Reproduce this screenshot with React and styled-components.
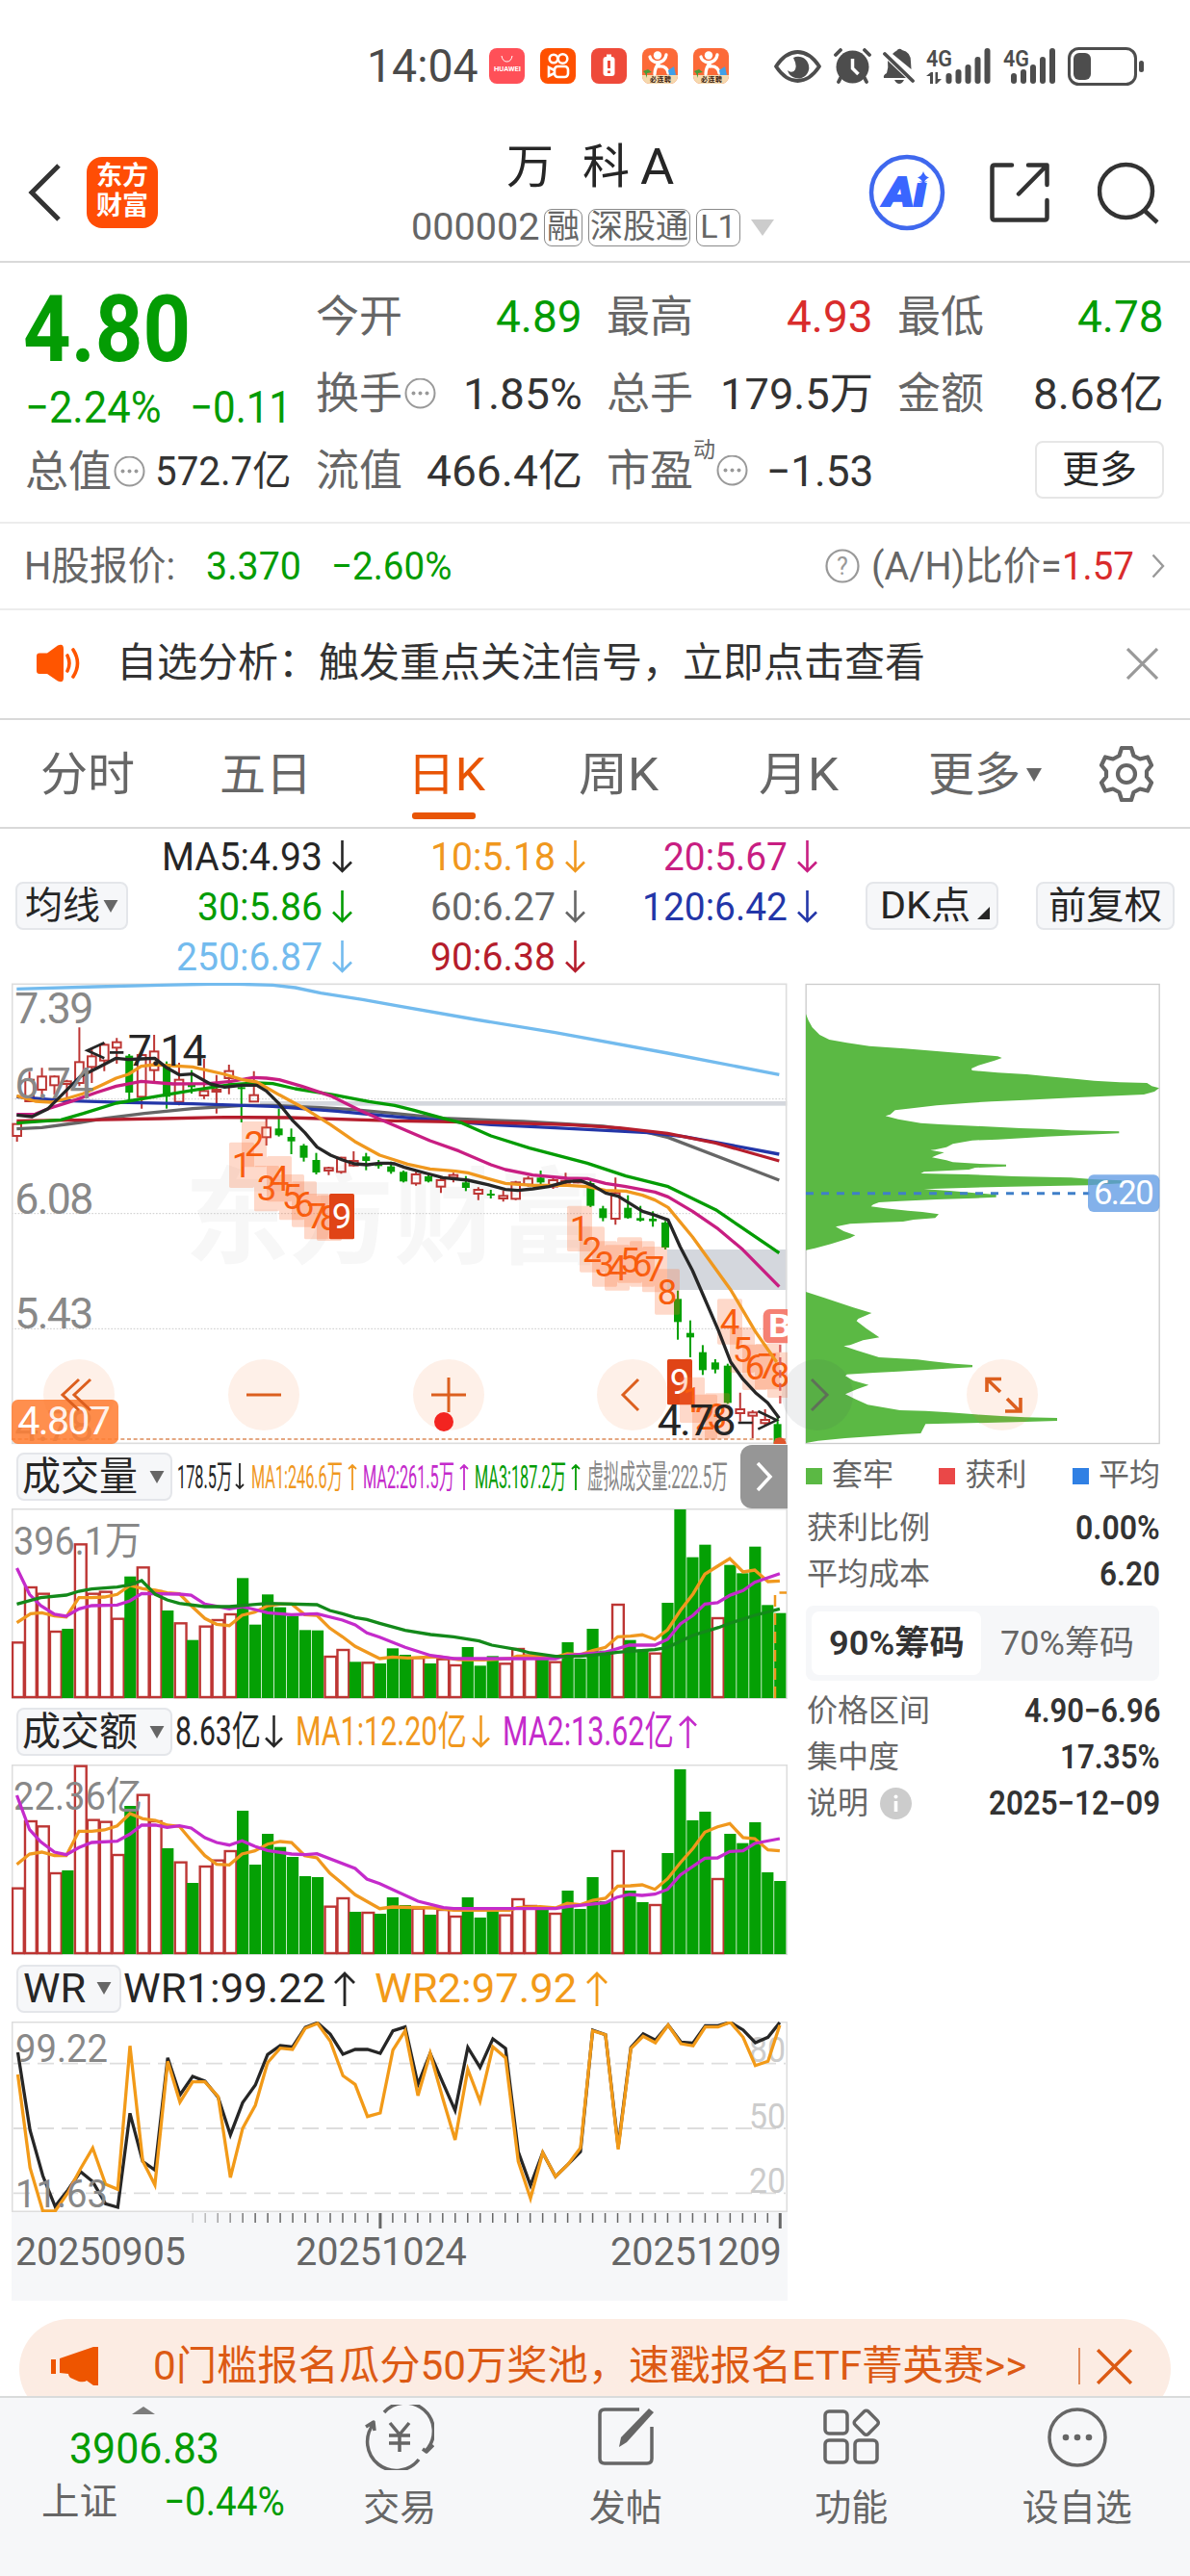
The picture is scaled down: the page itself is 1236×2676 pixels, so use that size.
import React, { useLayoutEffect, useRef, useState } from "react";
import styled, { createGlobalStyle } from "styled-components";

const C = {
  ink: "#262626",
  dark: "#333",
  grey: "#666",
  light: "#888",
  green: "#049c04",
  barGreen: "#04a004",
  red: "#d92c2c",
  barRed: "#bd3634",
  orange: "#f0981e",
  magenta: "#c81e82",
  violet: "#c42bcb",
  blue: "#2336a8",
  sky: "#73bbee",
  crimson: "#b51d2c",
  brand: "#e85506",
};

const GlobalStyle = createGlobalStyle`
  html, body { margin: 0; background: #fff; }
  body { width: 1236px; font-family: Roboto, "Noto Sans CJK SC", sans-serif; color: ${C.dark}; }
  svg { display: block; flex: none; }
  svg text { font-family: Roboto, "Noto Sans CJK SC", sans-serif; }
`;

/* ---------- text that keeps a set width ---------- */

const FitBox = styled.span`
  display: inline-block;
  flex: none;
  width: ${(p) => p.$w}px;
  margin-left: ${(p) => p.$ml || 0}px;
  font-size: ${(p) => (p.$size ? p.$size + "px" : "inherit")};
  font-weight: ${(p) => p.$weight || "inherit"};
  color: ${(p) => p.$color || "inherit"};
  line-height: 1;
  white-space: pre;
`;
const FitInner = styled.span`
  display: inline-block;
  transform-origin: 0 50%;
`;

function Fit({ w, ml, size, color, weight, children }) {
  const ref = useRef(null);
  const [scale, setScale] = useState(1);
  useLayoutEffect(() => {
    const n = ref.current.offsetWidth;
    if (n) setScale(w / n);
  }, [w, children]);
  return (
    <FitBox $w={w} $ml={ml} $size={size} $color={color} $weight={weight}>
      <FitInner ref={ref} style={{ transform: `scaleX(${scale})` }}>{children}</FitInner>
    </FitBox>
  );
}

/* ---------- page frame ---------- */

const Page = styled.div`
  width: 1236px;
  height: 2676px;
  overflow: hidden;
  display: flex;
  flex-direction: column;
  background: #fff;
`;

/* ---------- status bar ---------- */

const StatusBar = styled.div`
  height: 137px;
  padding-left: 381px;
  display: flex;
  align-items: center;
  flex: none;
  box-sizing: border-box;
`;
const AppIcons = styled.div`
  display: flex;
  gap: 16px;
  margin: 0 47px 0 11px;
`;
const SysIcons = styled.div`
  display: flex;
  align-items: center;
  height: 40px;
`;
const Gap = styled.i`
  width: ${(p) => p.$w}px;
  flex: none;
`;

const AppTile = ({ bg, children }) => (
  <svg width="37" height="37" viewBox="0 0 37 37">
    <rect width="37" height="37" rx="8" fill={bg} />
    {children}
  </svg>
);

const RunnerTile = () => (
  <svg width="37" height="37" viewBox="0 0 37 37">
    <rect width="37" height="37" rx="8" fill="#fc6a38" />
    <path d="M0 28H37V29a8 8 0 0 1-8 8H8a8 8 0 0 1-8-8Z" fill="#f5d9ae" />
    <circle cx="16" cy="7.500" r="4.200" fill="#fff" />
    <path d="M8 9Q9 14 16 15Q24 14 25 7M18 15Q13 20 13 27M17 19Q26 18 27 26" fill="none" stroke="#fff" strokeWidth="3.300" strokeLinecap="round" />
    <path d="M1 24l5-2 4 3-5 1v5l-2-5z" fill="#4a9a3a" />
    <path d="M27 23l6-4 2 9h-7z" fill="#3fa0e8" />
    <text x="8" y="35" fontSize="7" fontWeight="700" fill="#3a1c10" textLength="22">必连聘</text>
  </svg>
);

const Signal = ({ data }) => (
  <svg width={data ? 67 : 55} height="38" viewBox={data ? "0 0 67 38" : "0 0 55 38"} fill="#4d4d4d" overflow="visible">
    <text x="0" y="18.500" fontSize="24" fontWeight="600" textLength="27" lengthAdjust="spacingAndGlyphs">4G</text>
    {data && <path d="M0 29l5-4h2v12H4V29zM9.500 25h2.500v7h4l-5 5H9.500z" />}
    {[11, 15, 20, 28, 37].map((h, i) => (
      <rect key={h} x={(data ? 20.5 : 8) + i * 10} y={37 - h} width="6" height={h} rx="3" />
    ))}
  </svg>
);

function Status() {
  return (
    <StatusBar>
      <Fit w={116} size={48} color="#4a4a4a">14:04</Fit>
      <AppIcons>
        <AppTile bg="#ff5058">
          <path d="M13 8q1 6 5.500 6t5.500-6" fill="none" stroke="#fff" strokeWidth="1" />
          <text x="5" y="24" fontSize="6.500" fontWeight="700" fill="#fff" textLength="28" lengthAdjust="spacingAndGlyphs">HUAWEI</text>
        </AppTile>
        <AppTile bg="#ff5000">
          <g fill="none" stroke="#fff" strokeWidth="2.600">
            <circle cx="14" cy="11" r="4.300" />
            <circle cx="23.500" cy="11" r="4.800" />
            <rect x="15" y="19" width="14" height="11" rx="3.500" />
            <path d="M15 23l-6-3v9l6-3" />
          </g>
        </AppTile>
        <AppTile bg="#ee4a3a">
          <rect x="12.500" y="9" width="12" height="20" rx="3" fill="#fff" />
          <rect x="16" y="6.500" width="5" height="3" fill="#fff" />
          <path d="M18.500 13v8M18.500 23.500v2.500" stroke="#ee4a3a" strokeWidth="3" />
        </AppTile>
        <RunnerTile />
        <RunnerTile />
      </AppIcons>
      <SysIcons>
        <svg width="49" height="34" viewBox="0 0 49 34">
          <path d="M2 17Q12 2 24.500 2T47 17Q37 32 24.500 32T2 17Z" fill="none" stroke="#4d4d4d" strokeWidth="3.800" strokeLinejoin="round" />
          <path d="M20 8A11.300 11.300 0 1 1 14 21Q17 24 20.500 22Q25 18 20 8Z" fill="#4d4d4d" />
        </svg>
        <Gap $w={13} />
        <svg width="39" height="37" viewBox="0 0 39 37">
          <g fill="none" stroke="#4d4d4d" strokeWidth="3.800" strokeLinecap="round">
            <path d="M2 7l5-5M37 7l-5-5M7 31l-2 4M32 31l2 4" />
          </g>
          <circle cx="19.500" cy="19.500" r="17" fill="#4d4d4d" />
          <path d="M19.500 11v10l6 6" fill="none" stroke="#fff" strokeWidth="3.500" />
        </svg>
        <Gap $w={12} />
        <svg width="34" height="37" viewBox="0 0 34 37">
          <path d="M10 6Q13 3 14 3Q17-1 20 2Q29 4 29 14L29.500 22Z" fill="#4d4d4d" />
          <path d="M5 13L24 31H1Q0 28 4 26Q6 20 5 13Z" fill="#4d4d4d" />
          <path d="M2 6L31 34" stroke="#4d4d4d" strokeWidth="3.800" strokeLinecap="round" />
          <path d="M12 33h10q-2 4-5 4t-5-4z" fill="#4d4d4d" />
        </svg>
        <Gap $w={11} />
        <Signal data />
        <Gap $w={13} />
        <Signal />
        <Gap $w={12} />
        <svg width="80" height="40" viewBox="0 0 80 40">
          <rect x="1.500" y="1.500" width="69" height="37" rx="10" fill="none" stroke="#4d4d4d" strokeWidth="3" />
          <rect x="6" y="6" width="18" height="28" rx="6" fill="#4d4d4d" />
          <rect x="74" y="14" width="5" height="12" rx="2.500" fill="#4d4d4d" />
        </svg>
      </SysIcons>
    </StatusBar>
  );
}

/* ---------- title bar ---------- */

const TitleBar = styled.header`
  height: 136px;
  box-sizing: border-box;
  border-bottom: 2px solid #d9d9d9;
  padding: 0 32px 8px 29px;
  display: flex;
  align-items: center;
  flex: none;
`;
const Logo = styled.div`
  width: 74px;
  height: 74px;
  border-radius: 16px;
  background: #ff4d05;
  color: #fff;
  font-size: 27px;
  font-weight: 700;
  line-height: 31px;
  text-align: center;
  padding-top: 5px;
  box-sizing: border-box;
  margin-left: 26px;
`;
const TitleBlock = styled.div`
  margin-left: 263px;
  width: 400px;
  display: flex;
  flex-direction: column;
`;
const StockName = styled.div`
  padding-left: 99px;
  height: 60px;
  display: flex;
  align-items: center;
`;
const StockMeta = styled.div`
  height: 42px;
  margin-top: 12px;
  display: flex;
  align-items: center;
  color: ${C.grey};
`;
const Chip = styled.span`
  box-sizing: border-box;
  height: 39px;
  width: ${(p) => p.$w}px;
  margin-left: ${(p) => p.$ml}px;
  border: 1.500px solid #8a8a8a;
  border-radius: 8px;
  font-size: 34px;
  line-height: 35px;
  text-align: center;
  white-space: nowrap;
`;
const TitleActions = styled.div`
  display: flex;
  align-items: center;
  margin-left: auto;
`;

function Header() {
  return (
    <TitleBar>
      <svg width="35" height="60" viewBox="0 0 35 60">
        <path d="M32 2L4 30L32 58" fill="none" stroke="#333" strokeWidth="5" />
      </svg>
      <Logo>东方<br />财富</Logo>
      <TitleBlock>
        <StockName>
          <Fit w={49} size={49} color={C.ink}>万</Fit>
          <Fit w={49} ml={30} size={49} color={C.ink}>科</Fit>
          <Fit w={35} ml={11} size={51} color={C.ink}>A</Fit>
        </StockName>
        <StockMeta>
          <Fit w={134} size={39}>000002</Fit>
          <Chip $w={40} $ml={4}>融</Chip>
          <Chip $w={106} $ml={6}>深股通</Chip>
          <Chip $w={46} $ml={6}>L1</Chip>
          <Gap $w={11} />
          <svg width="24" height="17" viewBox="0 0 24 17">
            <path d="M0 0H24L12 17Z" fill="#ccc" />
          </svg>
        </StockMeta>
      </TitleBlock>
      <TitleActions>
        <svg width="80" height="80" viewBox="0 0 80 80">
          <circle cx="40" cy="40" r="37" fill="none" stroke="#3f68ee" strokeWidth="4.500" />
          <text x="16" y="53.500" fontSize="43" fontWeight="900" fontStyle="italic" fill="#3a66ff" stroke="#3a66ff" strokeWidth="2" textLength="44" lengthAdjust="spacingAndGlyphs">Ai</text>
          <rect x="48" y="16" width="16" height="12.500" fill="#fff" />
          <path d="M57 18Q58.500 23 63 24.500Q58.500 26 57 31Q55.500 26 51 24.500Q55.500 23 57 18Z" fill="#3a66ff" />
        </svg>
        <Gap $w={46} />
        <svg width="62" height="62" viewBox="0 0 62 62" fill="none" stroke="#333" strokeWidth="4.500" strokeLinecap="round" strokeLinejoin="round">
          <path d="M23 2.500H5Q2.500 2.500 2.500 5V57Q2.500 59.500 5 59.500H57Q59.500 59.500 59.500 57V39" />
          <path d="M40 2.500H59.500V23M59 3L30 32.500" />
        </svg>
        <Gap $w={50} />
        <svg width="64" height="65" viewBox="0 0 64 65" fill="none" stroke="#333" strokeWidth="4.500">
          <circle cx="29.500" cy="30.500" r="27.500" />
          <path d="M48 50L62 63" />
        </svg>
      </TitleActions>
    </TitleBar>
  );
}

/* ---------- quote block ---------- */

const Quote = styled.section`
  height: 271px;
  box-sizing: border-box;
  border-bottom: 2px solid #ececec;
  padding: 16px 26px 0 26px;
  display: grid;
  grid-template-columns: repeat(4, 277px);
  column-gap: 25px;
  flex: none;
`;
const QuoteColumn = styled.div`
  display: flex;
  flex-direction: column;
`;
const QuoteCell = styled.div`
  height: ${(p) => p.$h || 80}px;
  display: flex;
  align-items: center;
  font-size: 45px;
  color: ${(p) => p.$color || C.dark};
  justify-content: ${(p) => (p.$end ? "flex-end" : "space-between")};
`;
const Label = styled.span`
  display: flex;
  align-items: center;
  gap: 2px;
  color: ${C.grey};
  font-size: 45px;
  line-height: 1;
  white-space: nowrap;
`;
const Sup = styled.sup`
  font-size: 23px;
  line-height: 1;
  align-self: flex-start;
  margin: -11px -1px 0 -2px;
`;
const MoreButton = styled.button`
  width: 134px;
  height: 60px;
  margin-bottom: 2px;
  border: 2px solid #e6e6e6;
  border-radius: 8px;
  background: #fff;
  color: ${C.ink};
  font: 39px Roboto, "Noto Sans CJK SC", sans-serif;
  line-height: 50px;
  padding: 0;
`;

const Dots = () => (
  <svg width="33" height="33" viewBox="0 -1 33 33">
    <circle cx="16.500" cy="14.500" r="15" fill="none" stroke="#999" strokeWidth="2" />
    {[9.5, 16.5, 23.5].map((x) => <circle key={x} cx={x} cy="14.500" r="2" fill="#999" />)}
  </svg>
);

function QuoteBlock() {
  return (
    <Quote>
      <QuoteColumn>
        <QuoteCell $h={106} $color={C.green}><Fit w={174} ml={-2} size={96} weight={700}>4.80</Fit></QuoteCell>
        <QuoteCell $h={56} $color={C.green}>
          <Fit w={142} size={46}>−2.24%</Fit>
          <Fit w={106} size={46}>−0.11</Fit>
        </QuoteCell>
        <QuoteCell $h={78}>
          <Label>总值<Dots /></Label>
          <Fit w={142} size={42}>572.7亿</Fit>
        </QuoteCell>
      </QuoteColumn>
      <QuoteColumn>
        <QuoteCell><Label>今开</Label><Fit w={90} size={46} color={C.green}>4.89</Fit></QuoteCell>
        <QuoteCell><Label>换手<Dots /></Label><Fit w={124}>1.85%</Fit></QuoteCell>
        <QuoteCell><Label>流值</Label><Fit w={162}>466.4亿</Fit></QuoteCell>
      </QuoteColumn>
      <QuoteColumn>
        <QuoteCell><Label>最高</Label><Fit w={90} size={46} color={C.red}>4.93</Fit></QuoteCell>
        <QuoteCell><Label>总手</Label><Fit w={159}>179.5万</Fit></QuoteCell>
        <QuoteCell><Label>市盈<Sup>动</Sup><Dots /></Label><Fit w={111}>−1.53</Fit></QuoteCell>
      </QuoteColumn>
      <QuoteColumn>
        <QuoteCell><Label>最低</Label><Fit w={90} size={46} color={C.green}>4.78</Fit></QuoteCell>
        <QuoteCell><Label>金额</Label><Fit w={136}>8.68亿</Fit></QuoteCell>
        <QuoteCell $end><MoreButton>更多</MoreButton></QuoteCell>
      </QuoteColumn>
    </Quote>
  );
}

/* ---------- H share row and notice ---------- */

const HShare = styled.section`
  height: 90px;
  box-sizing: border-box;
  border-bottom: 2px solid #ececec;
  padding: 0 26px 0 25px;
  display: flex;
  align-items: center;
  font-size: 41px;
  color: ${C.grey};
  flex: none;
`;
const Push = styled.span`
  margin-left: auto;
  display: flex;
  align-items: center;
`;
const Notice = styled.section`
  height: 114px;
  box-sizing: border-box;
  border-bottom: 2px solid #d9d9d9;
  padding: 0 33px 2px 37px;
  display: flex;
  align-items: center;
  color: ${C.dark};
  flex: none;
`;

const Cross = ({ size, color, width }) => (
  <svg width={size} height={size} viewBox="0 0 32 32">
    <path d="M1 1L31 31M31 1L1 31" stroke={color} strokeWidth={width} fill="none" />
  </svg>
);

function Rows() {
  return (
    <>
      <HShare>
        <Fit w={157}>H股报价:</Fit>
        <Fit w={99} ml={32} color={C.green}>3.370</Fit>
        <Fit w={125} ml={31} color={C.green}>−2.60%</Fit>
        <Push>
          <svg width="36" height="36" viewBox="0 0 36 36">
            <circle cx="18" cy="18" r="16.500" fill="none" stroke="#999" strokeWidth="2.200" />
            <text x="18" y="27" fontSize="25" textAnchor="middle" fill="#999">?</text>
          </svg>
          <Fit w={198} ml={12}>(A/H)比价=</Fit>
          <Fit w={75} color={C.red}>1.57</Fit>
          <Gap $w={18} />
          <svg width="14" height="26" viewBox="0 0 14 26">
            <path d="M1.500 1.500L12 13L1.500 24.500" fill="none" stroke="#999" strokeWidth="2.400" />
          </svg>
        </Push>
      </HShare>
      <Notice>
        <svg width="49" height="40" viewBox="0 0 49 40">
          <path d="M4 9.500H12L23 1.500Q29-1 29 5V35Q29 41 23 38.500L12 31H4Q1 31 1 28V12.500Q1 9.500 4 9.500Z" fill="#ff5500" />
          <path d="M33 12q4 8 0 16M39 6q9 14 0 28" fill="none" stroke="#ff5500" strokeWidth="3.600" strokeLinecap="round" />
        </svg>
        <Fit w={840} ml={35} size={42}>自选分析：触发重点关注信号，立即点击查看</Fit>
        <Push><Cross size={33} color="#999" width={3} /></Push>
      </Notice>
    </>
  );
}

/* ---------- period tabs ---------- */

const Tabs = styled.nav`
  height: 113px;
  box-sizing: border-box;
  border-bottom: 2px solid #d9d9d9;
  padding-left: 42px;
  display: flex;
  align-items: center;
  flex: none;
`;
const Tab = styled.div`
  height: 111px;
  box-sizing: border-box;
  margin-right: ${(p) => p.$gap}px;
  padding-top: ${(p) => (p.$active ? 33 : 2)}px;
  display: flex;
  flex-direction: ${(p) => (p.$active ? "column" : "row")};
  align-items: ${(p) => (p.$active ? "flex-start" : "center")};
  color: ${(p) => (p.$active ? C.brand : C.grey)};
  &::after {
    content: ${(p) => (p.$active ? '""' : "none")};
    width: 66px;
    height: 7px;
    margin: 15px 0 0 5px;
    border-radius: 3px;
    background: ${C.brand};
  }
`;

const Caret = ({ w = 16, h = 14, color = "#666" }) => (
  <svg width={w} height={h} viewBox="0 0 16 14"><path d="M0 0H16L8 14Z" fill={color} /></svg>
);

function Periods() {
  return (
    <Tabs>
      <Tab $gap={88}><Fit w={98} size={48}>分时</Fit></Tab>
      <Tab $gap={99}><Fit w={96} size={48}>五日</Fit></Tab>
      <Tab $gap={97} $active><Fit w={81} size={48}>日K</Fit></Tab>
      <Tab $gap={104}><Fit w={83} size={48}>周K</Fit></Tab>
      <Tab $gap={93}><Fit w={83} size={48}>月K</Fit></Tab>
      <Tab $gap={60}><Fit w={96} size={48}>更多</Fit><Gap $w={6} /><Caret /></Tab>
      <svg width="56" height="58" viewBox="0 0 56 58" fill="none" stroke="#666" strokeWidth="4.200" strokeLinejoin="round">
        <path d="M23 2H33L35.500 10L42 13.500L50 11.500L54 20L49 26V32L54 38L50 46.500L42 44.500L35.500 48L33 56H23L20.500 48L14 44.500L6 46.500L2 38L7 32V26L2 20L6 11.500L14 13.500L20.500 10Z" />
        <circle cx="28" cy="29" r="9" />
      </svg>
    </Tabs>
  );
}

/* ---------- moving averages ---------- */

const AverageBar = styled.section`
  height: 160px;
  display: flex;
  align-items: center;
  padding-left: 16px;
  flex: none;
`;
const GreyButton = styled.button`
  box-sizing: border-box;
  width: ${(p) => p.$w}px;
  height: 50px;
  border: 2px solid #e4e6ea;
  border-radius: 8px;
  background: #f6f7f9;
  color: ${C.ink};
  font: ${(p) => p.$size || 39}px Roboto, "Noto Sans CJK SC", sans-serif;
  line-height: 1;
  padding: 0 ${(p) => (p.$pad === undefined ? 9 : p.$pad)}px;
  display: flex;
  align-items: center;
  flex: none;
`;
const AverageGrid = styled.div`
  width: 716px;
  margin: 2px 50px 0 0;
  display: grid;
  grid-template-columns: 233px 242px 241px;
  grid-auto-rows: 52px;
`;
const Average = styled.div`
  display: flex;
  align-items: center;
  justify-content: flex-end;
  font-size: 41px;
  color: ${(p) => p.$color};
`;
const ArrowSvg = styled.svg`
  margin-left: ${(p) => p.$ml}px;
`;

const Arrow = ({ up, w = 21, h = 34, stroke = 2.6, ml = 10 }) => (
  <ArrowSvg $ml={ml} width={w} height={h} viewBox={`0 0 ${w} ${h}`} fill="none" stroke="currentColor" strokeWidth={stroke}>
    {up ? (
      <path d={`M${w / 2} ${h}V2M1 ${w * 0.5 + 1}L${w / 2} 2L${w - 1} ${w * 0.5 + 1}`} />
    ) : (
      <path d={`M${w / 2} 0V${h - 2}M1 ${h - 1 - w * 0.5}L${w / 2} ${h - 2}L${w - 1} ${h - 1 - w * 0.5}`} />
    )}
  </ArrowSvg>
);

const averages = [
  ["MA5:4.93", 167, C.ink],
  ["10:5.18", 130, C.orange],
  ["20:5.67", 129, C.magenta],
  ["30:5.86", 130, C.green],
  ["60:6.27", 130, C.grey],
  ["120:6.42", 151, C.blue],
  ["250:6.87", 152, C.sky],
  ["90:6.38", 130, C.crimson],
];

function Averages() {
  return (
    <AverageBar>
      <GreyButton $w={117} $pad={8}><Fit w={78}>均线</Fit><Gap $w={3} /><Caret h={13} /></GreyButton>
      <AverageGrid>
        {averages.map(([text, w, color]) => (
          <Average key={text} $color={color}><Fit w={w}>{text}</Fit><Arrow /></Average>
        ))}
      </AverageGrid>
      <GreyButton $w={138} $pad={11}>
        <Fit w={94}>DK点</Fit><Gap $w={9} />
        <svg width="13" height="28" viewBox="0 0 13 28"><path d="M13 15V28H0Z" fill={C.ink} /></svg>
      </GreyButton>
      <Gap $w={39} />
      <GreyButton $w={144} $pad={11}><Fit w={118}>前复权</Fit></GreyButton>
    </AverageBar>
  );
}

/* ---------- candle chart ---------- */

const pts = (a) => a.map((p) => p.join(",")).join(" ");
// The right half of each series is listed with its own origin, 1230 units in.
const join = (a, b) => pts([...a, ...b.map(([x, y]) => [x + 1230, y])]);

const candles = [
  ["r", 473, 473, 510, 528], ["r", 310, 335, 402, 405], ["r", 298, 325, 366, 383], ["r", 322, 325, 352, 382],
  ["r", 335, 340, 348, 390], ["r", 172, 280, 345, 355], ["r", 235, 262, 295, 345], ["r", 220, 226, 275, 308],
  ["r", 205, 218, 235, 285], ["g", 255, 260, 375, 402], ["r", 250, 258, 388, 425], ["r", 195, 247, 305, 340],
  ["g", 278, 285, 388, 425], ["r", 282, 335, 404, 415], ["g", 305, 350, 358, 378], ["r", 270, 370, 384, 395],
  ["r", 320, 366, 372, 440], ["r", 288, 308, 330, 380], ["g", 350, 358, 364, 468], ["r", 308, 383, 403, 405],
  ["r", 455, 484, 514, 540], ["g", 425, 487, 508, 512], ["g", 487, 513, 527, 567], ["g", 535, 540, 578, 590],
  ["g", 563, 585, 624, 630], ["r", 606, 610, 618, 632], ["r", 575, 578, 622, 628], ["r", 558, 588, 602, 605],
  ["g", 563, 574, 588, 617], ["g", 585, 598, 604, 612], ["g", 590, 605, 622, 628], ["g", 618, 622, 652, 655],
  ["r", 622, 630, 658, 665], ["g", 632, 636, 652, 655], ["r", 640, 648, 668, 688], ["r", 625, 632, 640, 655],
  ["g", 635, 655, 672, 682], ["r", 670, 678, 690, 710], ["g", 678, 690, 696, 705], ["r", 680, 697, 705, 715],
  ["r", 650, 655, 706, 710], ["r", 635, 643, 662, 668], ["g", 618, 640, 655, 660], ["r", 640, 648, 668, 675],
  ["r", 625, 650, 656, 660], ["r", 645, 648, 655, 658], ["g", 650, 657, 728, 732], ["g", 728, 736, 766, 776],
  ["r", 640, 688, 768, 787], ["g", 695, 734, 766, 768], ["g", 728, 766, 774, 777], ["g", 745, 768, 776, 793],
  ["g", 775, 780, 858, 864], ["g", 992, 1018, 1090, 1145], ["g", 1085, 1124, 1138, 1200], ["g", 1162, 1184, 1240, 1255],
  ["g", 1206, 1216, 1238, 1250], ["g", 1220, 1226, 1342, 1345], ["r", 1310, 1362, 1374, 1400], ["r", 1365, 1372, 1382, 1452],
  ["r", 1362, 1395, 1405, 1412], ["g", 1385, 1408, 1468, 1470],
];

const lines = [
  [C.sky, join([[52, 52], [300, 45], [500, 40], [700, 36], [850, 40], [920, 48], [1000, 65], [1130, 85]], [[0, 103], [250, 147], [500, 188], [850, 252], [1198, 319]])],
  [C.grey, join([[52, 488], [130, 484], [250, 468], [330, 455], [450, 440], [600, 425], [760, 415], [850, 415], [1000, 422], [1100, 428]], [[0, 440], [150, 455], [400, 465], [650, 480], [790, 500], [852, 515], [1198, 648]])],
  [C.blue, join([[52, 388], [200, 400], [400, 406], [600, 410], [760, 415], [850, 418], [1050, 433]], [[0, 450], [300, 475], [500, 485], [790, 500], [900, 512], [1000, 530], [1198, 567]])],
  [C.crimson, join([[52, 463], [280, 460], [500, 456], [700, 452], [900, 453]], [[0, 463], [300, 468], [540, 475], [700, 485], [850, 502], [1000, 532], [1198, 588]])],
  [C.green, join([[52, 470], [190, 460], [260, 440], [362, 408], [480, 388], [600, 368], [720, 350], [800, 345], [850, 347], [920, 363], [1040, 382], [1150, 403]], [[0, 415], [60, 430], [150, 455], [210, 470], [300, 510], [420, 548], [600, 595], [720, 635], [852, 668], [1000, 740], [1198, 875]])],
  [C.magenta, join([[52, 443], [110, 442], [150, 425], [220, 403], [300, 375], [362, 355], [440, 340], [540, 348], [650, 347], [720, 340], [790, 328], [830, 330], [870, 335], [940, 355], [1030, 385], [1120, 430], [1200, 465]], [[0, 478], [40, 495], [110, 525], [200, 557], [300, 600], [345, 615], [430, 632], [537, 642], [600, 643], [657, 658], [720, 668], [811, 685], [852, 700], [928, 745], [1008, 800], [1085, 865], [1198, 980]])],
  [C.orange, join([[52, 385], [110, 402], [160, 405], [210, 393], [260, 378], [320, 350], [362, 330], [400, 318], [440, 293], [482, 288], [600, 295], [700, 318], [755, 335], [800, 342], [870, 382], [950, 425], [1030, 475], [1105, 527], [1183, 570]], [[0, 585], [40, 598], [110, 613], [190, 620], [228, 625], [290, 643], [345, 658], [430, 664], [537, 664], [600, 668], [657, 680], [720, 682], [772, 695], [811, 710], [852, 733], [928, 825], [1047, 990], [1124, 1120], [1190, 1215]])],
  [C.ink, join([[52, 445], [100, 450], [150, 425], [180, 395], [250, 325], [300, 300], [362, 268], [400, 272], [440, 270], [482, 268], [520, 298], [560, 320], [600, 317], [655, 348], [700, 358], [755, 352], [800, 352], [830, 370], [870, 410], [910, 460], [950, 500], [988, 545], [1030, 570], [1067, 585], [1105, 597], [1145, 600], [1183, 595], [1210, 595]], [[0, 597], [30, 608], [100, 627], [150, 640], [228, 648], [290, 662], [345, 677], [384, 680], [430, 675], [480, 668], [537, 652], [580, 650], [618, 665], [657, 688], [696, 698], [735, 722], [772, 745], [811, 757], [852, 772], [889, 855], [928, 930], [967, 1020], [1008, 1115], [1047, 1215], [1085, 1268], [1124, 1310], [1162, 1342], [1198, 1390]])],
];

const counts = [
  [1, 714, 530], [2, 753, 465], [3, 792, 603], [4, 831, 573], [5, 870, 630], [6, 909, 652], [7, 948, 690], [8, 987, 695], [9, 1026, 690],
  [1, 1767, 728], [2, 1806, 793], [3, 1845, 838], [4, 1884, 850], [5, 1923, 826], [6, 1962, 838], [7, 2001, 855], [8, 2040, 925], [9, 2079, 1206],
  [1, 2118, 1262], [2, 2157, 1316], [3, 2196, 1312], [4, 2235, 1018], [5, 2274, 1106], [6, 2313, 1160], [7, 2352, 1158], [8, 2391, 1184],
];

const AxisText = ({ x, y, w, size = 134, fill = C.light, children }) => (
  <text x={x} y={y} fontSize={size} fill={fill} textLength={w} lengthAdjust="spacing">{children}</text>
);

function CandleChart() {
  return (
    <svg width="806" height="480" viewBox="36 33 2418 1440">
      <text x="575" y="882" fontSize="326" fontWeight="700" fill="#f7f7f7">东方财富</text>
      <rect x="810" y="402" width="1642" height="14" fill="#d4d7dd" />
      <rect x="2079" y="864" width="373" height="126" fill="#d4d7dd" />
      {[395, 752, 1111].map((y) => <path key={y} d={`M36 ${y}H2451`} stroke="#ccc" strokeWidth="3" strokeDasharray="5 5" />)}
      <rect x="38" y="37" width="2412" height="1431" fill="none" stroke="#ddd" strokeWidth="5" />
      <AxisText x={46} y={160} w={246}>7.39</AxisText>
      <AxisText x={46} y={753} w={246}>6.08</AxisText>
      <AxisText x={46} y={1110} w={246}>5.43</AxisText>
      {candles.map(([kind, hi, top, bottom, lo], i) => {
        const x = 53 + i * 38.85;
        const color = kind === "r" ? C.barRed : C.barGreen;
        return kind === "g" ? (
          <g key={i} fill={color}>
            <rect x={x - 3} y={hi} width="6" height={lo - hi} />
            <rect x={x - 12} y={top} width="24" height={bottom - top} />
          </g>
        ) : (
          <g key={i} fill="none" stroke={color} strokeWidth="6">
            <path d={`M${x} ${hi}V${top}M${x} ${bottom}V${lo}`} />
            <rect x={x - 13} y={top} width="26" height={bottom - top} />
          </g>
        );
      })}
      {counts.map(([n, x, y], i) => (
        <g key={i}>
          <rect x={x} y={y} width="78" height="142" rx="5" fill={n === 9 ? "#e04416" : "rgba(250,110,50,.26)"} />
          <text x={x + 39} y={y + 109} fontSize="110" textAnchor="middle" fill={n === 9 ? "#fff" : "#f85c0c"}>{n}</text>
        </g>
      ))}
      {lines.map(([color, p]) => <polyline key={color} points={p} fill="none" stroke={color} strokeWidth="10" strokeLinejoin="round" />)}
      <AxisText x={46} y={394} w={246}>6.74</AxisText>
      <path d="M325 220L272 244L325 268M342 250H385" fill="none" stroke={C.ink} strokeWidth="8" />
      <AxisText x={398} y={291} w={246} fill={C.ink}>7.14</AxisText>
      <path d="M36 1455H2451" stroke="#dc8b5a" strokeWidth="5" strokeDasharray="12 8" />
      <rect x="2378" y="1050" width="110" height="106" rx="20" fill="#f58073" />
      <text x="2394" y="1137" fontSize="98" fontWeight="700" fill="#fff" textLength="72" lengthAdjust="spacingAndGlyphs">B</text>
      <path d="M2431 1160V1350" stroke="#d86060" strokeWidth="7" strokeDasharray="24 16" />
      <path d="M2410 1470a20 20 0 0 1 40 0z" fill="#e0562c" />
      <AxisText x={2048} y={1442} w={246} fill={C.ink}>4.78</AxisText>
      <path d="M2300 1404H2345M2362 1368L2420 1396L2362 1424" fill="none" stroke={C.ink} strokeWidth="8" />
      <AxisText x={46} y={1460} w={246}>4.78</AxisText>
      <rect x="36" y="1332" width="333" height="138" rx="20" fill="rgba(255,126,52,.87)" />
      <text x="55" y="1440" fontSize="124" fill="#fff" textLength="290">4.807</text>
    </svg>
  );
}

/* ---------- chip distribution ---------- */

const upperChips = "52,130 60,150 72,172 95,195 125,210 180,220 250,230 360,238 460,246 560,254 650,262 663,267 640,275 590,290 568,300 570,306 650,313 740,318 800,324 890,332 950,338 1030,343 1115,345 1130,355 1153,361 1138,372 1105,381 985,386 900,390 735,398 630,403 560,407 460,415 370,425 330,430 315,443 300,448 340,458 410,470 470,474 600,480 720,486 815,489 880,493 1028,496 1028,502 910,507 800,512 740,516 650,521 570,524 510,535 490,545 455,553 440,554 483,562 460,570 445,577 490,586 510,592 595,597 676,599 676,605 580,609 560,615 420,622 410,627 555,630 700,636 878,640 945,645 1036,649 1036,658 930,664 690,668 570,671 420,676 500,681 570,687 645,693 645,701 580,704 460,708 345,713 280,717 262,724 255,730 300,736 370,743 415,747 466,754 455,766 388,771 355,777 275,780 190,784 145,793 170,807 206,820 190,828 130,847 80,860 52,866";
const lowerChips = "52,996 110,1015 200,1045 257,1062 215,1080 210,1087 240,1110 281,1138 230,1147 190,1162 170,1165 210,1178 280,1200 400,1207 440,1212 515,1220 571,1224 571,1231 490,1235 430,1239 340,1244 265,1248 180,1253 175,1258 200,1273 248,1286 210,1300 175,1315 205,1330 245,1348 345,1365 425,1367 500,1372 580,1378 660,1383 735,1387 835,1389 835,1398 735,1401 565,1405 425,1408 410,1437 350,1440 175,1452 90,1460 52,1467";

function ChipChart() {
  return (
    <svg width="370" height="480" viewBox="49 33 1110 1440">
      <rect x="52.500" y="37.500" width="1101" height="1431" fill="none" stroke="#ccc" strokeWidth="4" />
      <g fill="#5bb944"><polygon points={upperChips} /><polygon points={lowerChips} /></g>
      <path d="M52 689H935" stroke="#3f7fc8" strokeWidth="9" strokeDasharray="24 24" />
      <rect x="931" y="631" width="223" height="116" rx="18" fill="rgba(92,152,228,.76)" />
      <text x="949" y="723" fontSize="104" fill="#fff" textLength="188">6.20</text>
    </svg>
  );
}

/* ---------- volume style charts ---------- */

const KX = 1568 / 830;

const volumeBars = "r620 r448 r468 r586 g577 r314 r468 r462 r546 g414 r386 r460 g520 r560 g612 r570 r550 r532 g419 g564 g470 g510 g537 g581 g582 r664 r643 g680 r683 g685 g638 g658 r668 g685 r672 r691 g634 g692 g662 r686 r640 r660 g672 r681 g619 g670 g577 g645 r502 g612 g642 r654 g496 g205 g354 g315 r544 g378 g404 g321 g503 g528".split(" ");
const turnoverBars = "r545 r336 r352 r498 g489 r164 r332 r338 r441 g288 r254 r336 g420 r464 g528 r477 r458 r429 g303 g471 g375 g416 g447 g507 g510 r602 r576 g618 r621 g624 g573 g597 r608 g627 r612 r633 g573 g636 g603 r629 r579 r600 g612 r624 g552 g609 g510 g585 r429 g552 g588 r597 g435 g174 g333 g306 r516 g375 g404 g339 g495 g522".split(" ");

const volumeLines = [
  [C.orange, "33,558 60,530 82,527 107,537 130,540 155,480 180,480 205,478 230,470 255,442 280,452 305,457 328,465 352,468 375,505 402,545 425,563 450,567 475,535 500,525 525,505 550,500 572,500 598,533 622,535 647,575 672,602 697,632 745,670 770,665 800,668 860,664 900,673 950,674 1000,670 1015,662 1060,662 1090,665 1113,655 1138,658 1163,645 1188,635 1212,602 1237,600 1260,596 1285,610 1310,580 1335,520 1360,468 1383,407 1408,382 1432,358 1458,400 1481,394 1507,430 1530,428"],
  [C.violet, "33,388 58,470 80,505 107,532 130,538 155,515 180,505 230,503 255,490 278,467 352,469 375,472 402,500 425,507 450,515 475,508 500,517 525,527 572,533 622,530 672,550 697,565 720,590 745,603 795,635 845,660 890,670 1090,670 1113,660 1188,650 1235,628 1285,628 1310,610 1335,562 1360,535 1383,500 1408,496 1432,473 1458,458 1481,432 1530,405"],
  ["#13891a", "33,500 80,480 130,472 155,460 180,453 230,447 255,440 278,427 305,470 328,487 352,498 402,508 450,508 525,498 622,502 647,520 672,530 697,542 720,548 745,560 795,582 845,595 890,602 940,615 965,628 1015,642 1040,652 1090,663 1138,663 1188,655 1212,650 1285,642 1310,635 1360,597 1410,573 1432,560 1481,535 1530,515"],
];
const turnoverLines = [
  [C.orange, "33,470 58,438 82,432 107,443 130,443 155,367 180,367 205,363 230,350 255,312 280,328 305,333 328,348 352,352 375,395 402,443 425,470 450,472 475,438 500,428 525,407 550,399 572,402 598,443 622,450 647,497 672,530 697,565 745,608 770,603 850,606 890,613 950,613 1000,613 1015,605 1060,602 1090,606 1113,592 1138,596 1163,582 1188,576 1212,538 1237,537 1260,534 1285,548 1310,515 1335,465 1360,420 1383,370 1408,353 1432,343 1458,387 1481,390 1507,425 1530,428"],
  [C.violet, "33,255 58,362 80,400 107,432 130,440 155,418 180,402 230,398 255,376 278,348 305,348 328,355 352,350 375,357 402,387 425,402 450,410 475,397 500,414 525,427 572,438 600,440 622,437 697,483 720,516 745,530 820,585 870,605 890,608 1090,608 1113,602 1188,590 1210,573 1235,564 1260,567 1285,563 1310,548 1335,503 1383,451 1408,450 1432,430 1458,428 1481,405 1530,390"],
];
const wrLines = [
  [C.ink, "35,305 59,548 84,690 108,785 133,735 158,677 182,708 207,777 231,788 255,495 280,645 304,672 329,322 353,438 378,380 402,395 428,445 452,562 476,462 501,407 525,312 550,284 574,288 599,227 623,213 648,248 673,311 697,296 721,296 746,308 771,238 795,226 820,405 844,308 869,400 893,486 918,290 942,352 967,263 992,293 1017,615 1041,720 1065,618 1090,692 1114,655 1139,615 1163,236 1188,250 1213,600 1238,290 1262,247 1286,267 1311,220 1336,273 1360,276 1384,222 1409,222 1433,211 1458,235 1482,275 1507,258 1530,212"],
  ["#f29a18", "35,374 59,665 84,800 108,800 133,743 158,668 182,603 207,716 231,732 255,285 280,643 304,718 329,333 353,460 378,397 402,397 428,443 452,695 476,542 501,470 525,337 550,292 574,296 599,230 623,215 648,270 673,378 697,405 721,505 746,494 771,298 795,238 820,440 844,308 869,450 893,578 918,358 942,458 967,288 992,322 1017,645 1041,760 1065,618 1090,692 1114,655 1139,603 1163,238 1188,250 1213,607 1238,293 1262,255 1286,275 1311,220 1336,278 1360,285 1384,226 1409,226 1433,211 1458,258 1482,346 1507,333 1530,220"],
];

// Series are stored on a grid of KX units per pixel across and 3 down.
const toPixels = (s, y0) => s.split(" ").map((p) => {
  const [x, y] = p.split(",").map(Number);
  return `${(x / KX - 12).toFixed(1)},${((y - y0) / 3).toFixed(1)}`;
}).join(" ");

const Plot = ({ y0, series, width = 3.3, children, over }) => (
  <svg width="806" height="198" viewBox="0 0 806 198">
    <rect x=".75" y=".75" width="804.500" height="196.500" fill="none" stroke="#ddd" strokeWidth="1.500" />
    {children}
    {series.map(([color, p]) => (
      <polyline key={color} points={toPixels(p, y0)} fill="none" stroke={color} strokeWidth={width} strokeLinejoin="miter" />
    ))}
    {over}
  </svg>
);

const Bars = ({ bars, y0 }) => bars.map((b, i) => {
  const top = (Number(b.slice(1)) - y0) / 3;
  const x = i * 12.98;
  return b[0] === "g" ? (
    <rect key={i} x={x + 0.4} y={top} width="12.200" height={197 - top} fill={C.barGreen} />
  ) : (
    <rect key={i} x={x + 1} y={top} width="11.800" height={196 - top} fill="#fff" stroke={C.barRed} strokeWidth="2.400" />
  );
});

const PlotText = ({ x, y, w, size = 41, fill = C.light, children }) => (
  <text x={x} y={y} fontSize={size} fill={fill} textLength={w} lengthAdjust="spacingAndGlyphs">{children}</text>
);

/* ---------- chart area layout ---------- */

const ChartArea = styled.section`
  position: relative;
  height: 1388px;
  padding-left: 12px;
  display: flex;
  gap: 18px;
  align-items: flex-start;
  flex: none;
`;
const LeftColumn = styled.div`
  width: 806px;
  display: flex;
  flex-direction: column;
`;
const RightColumn = styled.div`
  width: 370px;
  display: flex;
  flex-direction: column;
`;
const PlotHeader = styled.div`
  height: ${(p) => p.$h}px;
  display: flex;
  align-items: center;
  padding-left: 5px;
  font-size: ${(p) => p.$size}px;
`;
const Tint = styled.span`
  display: flex;
  align-items: center;
  margin-left: ${(p) => p.$ml}px;
  color: ${(p) => p.$color};
`;
const NextButton = styled.button`
  width: 49px;
  height: 66px;
  margin: 0 0 0 auto;
  padding: 0;
  border: 0;
  border-radius: 12px 0 0 12px;
  background: #969696;
  display: flex;
  align-items: center;
  justify-content: center;
`;
const AxisStrip = styled.div`
  height: 92px;
  background: #f6f7f9;
`;
const DateRow = styled.div`
  display: flex;
  padding: 4px 0 0 4px;
  font-size: 40px;
  color: ${C.grey};
`;
const ToolRow = styled.div`
  position: absolute;
  top: 391px;
  left: 45px;
  display: flex;
  gap: 117.800px;
`;
const Tool = styled.button`
  position: relative;
  width: 74px;
  height: 74px;
  padding: 0;
  border: 0;
  border-radius: 50%;
  background: ${(p) => (p.$grey ? "rgba(70,80,90,.09)" : "rgba(250,120,50,.11)")};
  display: flex;
  align-items: center;
  justify-content: center;
`;
const RedDot = styled.i`
  position: absolute;
  left: 22px;
  top: 55px;
  width: 20px;
  height: 20px;
  border-radius: 50%;
  background: #f32420;
`;

const tools = [
  "M37 21L20 37L37 53M49 21L32 37L49 53",
  "M19 37H55",
  "M19 37H55M37 19V55",
  "M43 21L27 37L43 53",
  "M31 21L47 37L31 53",
  "M21 34V20.500H36M22 21.500L35 34M56 40V54H40M42 41L54 53",
];

const SelectBox = ({ w, textW, size, gap, children }) => (
  <GreyButton $w={w} $size={size} $pad={4}>
    <Fit w={textW}>{children}</Fit><Gap $w={gap} /><Caret w={16} h={13} />
  </GreyButton>
);

/* ---------- chip details ---------- */

const Legend = styled.div`
  height: 62px;
  padding: 0 1px 0 1px;
  display: flex;
  align-items: center;
  justify-content: space-between;
`;
const LegendItem = styled.span`
  display: flex;
  align-items: center;
  gap: 10px;
  font-size: 32px;
  line-height: 1;
  color: ${C.grey};
  &::before {
    content: "";
    width: 17px;
    height: 17px;
    margin-top: 3px;
    background: ${(p) => p.$color};
  }
`;
const Detail = styled.div`
  height: 48px;
  padding: 0 1px 0 2px;
  display: flex;
  align-items: center;
  justify-content: space-between;
  color: ${C.grey};
  font-size: 32px;
`;
const DetailLabel = styled.span`
  display: flex;
  align-items: center;
  gap: 12px;
  line-height: 1;
`;
const RangeSwitch = styled.div`
  box-sizing: border-box;
  width: 367px;
  height: 78px;
  margin: 9px 0 7px 1px;
  padding: 6px;
  border-radius: 8px;
  background: #f6f7f9;
  display: flex;
`;
const RangeOption = styled.div`
  width: ${(p) => p.$w}px;
  border-radius: 8px;
  background: ${(p) => (p.$on ? "#fff" : "transparent")};
  color: ${(p) => (p.$on ? C.dark : C.grey)};
  display: flex;
  align-items: center;
  justify-content: center;
`;

const Info = () => (
  <svg width="33" height="33" viewBox="0 0 33 33">
    <circle cx="16.500" cy="16.500" r="16.500" fill="#ccc" />
    <circle cx="16.500" cy="9.500" r="2" fill="#fff" />
    <path d="M16.500 14V25" stroke="#fff" strokeWidth="3.600" />
  </svg>
);

function ChipDetails() {
  const value = (text, w) => <Fit w={w} size={35} weight={600} color={C.dark}>{text}</Fit>;
  return (
    <>
      <Legend>
        <LegendItem $color="#5bb944">套牢</LegendItem>
        <LegendItem $color="#ea4848">获利</LegendItem>
        <LegendItem $color="#3080e4">平均</LegendItem>
      </Legend>
      <Detail><DetailLabel>获利比例</DetailLabel>{value("0.00%", 88)}</Detail>
      <Detail><DetailLabel>平均成本</DetailLabel>{value("6.20", 63)}</Detail>
      <RangeSwitch>
        <RangeOption $on $w={178}><Fit w={141} size={35} weight={600}>90%筹码</Fit></RangeOption>
        <RangeOption $w={181}><Fit w={139} size={35}>70%筹码</Fit></RangeOption>
      </RangeSwitch>
      <Detail><DetailLabel>价格区间</DetailLabel>{value("4.90−6.96", 141)}</Detail>
      <Detail><DetailLabel>集中度</DetailLabel>{value("17.35%", 104)}</Detail>
      <Detail><DetailLabel>说明<Info /></DetailLabel>{value("2025−12−09", 178)}</Detail>
    </>
  );
}

const ticks = Array.from({ length: 48 }, (_, k) => k + 14);

function Charts() {
  const small = { w: 10, h: 28, stroke: 1.8, ml: 5 };
  const mid = { w: 19, h: 34, stroke: 2.5, ml: 5 };
  return (
    <ChartArea>
      <LeftColumn>
        <CandleChart />
        <PlotHeader $h={66} $size={34}>
          <SelectBox w={162} textW={120} size={41} gap={12}>成交量</SelectBox>
          <Tint $ml={5} $color={C.ink}><Fit w={57}>178.5万</Fit><Arrow {...small} ml={3} /></Tint>
          <Tint $ml={7} $color={C.orange}><Fit w={95}>MA1:246.6万</Fit><Arrow up {...small} /></Tint>
          <Tint $ml={6} $color={C.violet}><Fit w={95}>MA2:261.5万</Fit><Arrow up {...small} /></Tint>
          <Tint $ml={6} $color={C.green}><Fit w={95}>MA3:187.2万</Fit><Arrow up {...small} /></Tint>
          <Tint $ml={7} $color={C.light}><Fit w={146}>虚拟成交量:222.5万</Fit></Tint>
          <NextButton>
            <svg width="18" height="32" viewBox="0 0 18 32"><path d="M2 2L15 16L2 30" fill="none" stroke="#fff" strokeWidth="3.500" /></svg>
          </NextButton>
        </PlotHeader>
        <Plot y0={202} series={volumeLines} over={
          <path d="M793 197V87.500H805" fill="none" stroke={C.orange} strokeWidth="2.500" strokeDasharray="12 7" />
        }>
          <Bars bars={volumeBars} y0={202} />
          <PlotText x={2} y={48} w={133}>396.1万</PlotText>
        </Plot>
        <PlotHeader $h={68} $size={42}>
          <SelectBox w={162} textW={120} size={41} gap={12}>成交额</SelectBox>
          <Tint $ml={3} $color={C.ink}><Fit w={89}>8.63亿</Fit><Arrow {...mid} ml={4} /></Tint>
          <Tint $ml={13} $color={C.orange}><Fit w={178}>MA1:12.20亿</Fit><Arrow {...mid} ml={5} /></Tint>
          <Tint $ml={13} $color={C.violet}><Fit w={178}>MA2:13.62亿</Fit><Arrow up {...mid} ml={5} /></Tint>
        </PlotHeader>
        <Plot y0={159} series={turnoverLines}>
          <Bars bars={turnoverBars} y0={159} />
          <PlotText x={2} y={47} w={134}>22.36亿</PlotText>
        </Plot>
        <PlotHeader $h={69} $size={43}>
          <SelectBox w={109} textW={65} size={42} gap={12}>WR</SelectBox>
          <Tint $ml={2} $color={C.ink}><Fit w={210}>WR1:99.22</Fit><Arrow up w={22} h={36} ml={9} stroke={2.8} /></Tint>
          <Tint $ml={20} $color="#f29a18"><Fit w={210}>WR2:97.92</Fit><Arrow up w={22} h={36} ml={10} stroke={2.8} /></Tint>
        </PlotHeader>
        <Plot y0={209} series={wrLines} over={
          <PlotText x={4} y={193} w={96} size={40}>11.63</PlotText>
        }>
          {[340, 542, 744].map((y) => (
            <path key={y} d={`M2 ${(y - 209) / 3}H804`} stroke="#ddd" strokeWidth="1.800" strokeDasharray="17 8" />
          ))}
          <PlotText x={4} y={42} w={96} size={40}>99.22</PlotText>
          <PlotText x={766} y={42} w={38} size={37} fill="#ccc">80</PlotText>
          <PlotText x={766} y={111} w={38} size={37} fill="#ccc">50</PlotText>
          <PlotText x={766} y={178} w={38} size={37} fill="#ccc">20</PlotText>
        </Plot>
        <AxisStrip>
          <svg width="806" height="18" viewBox="0 0 806 18">
            {ticks.map((i) => {
              const long = i === 29 || i === 61;
              return <path key={i} d={`M${6.5 + i * 12.98} 1V${long ? 17 : 11}`} stroke="#666" strokeOpacity={Math.min(1, (i - 12) / 7)} strokeWidth={long ? 3 : 1.5} />;
            })}
          </svg>
          <DateRow>
            <Fit w={177}>20250905</Fit><Fit w={178} ml={114}>20251024</Fit><Fit w={178} ml={149}>20251209</Fit>
          </DateRow>
        </AxisStrip>
      </LeftColumn>
      <RightColumn>
        <ChipChart />
        <ChipDetails />
      </RightColumn>
      <ToolRow>
        {tools.map((d, i) => (
          <Tool key={d} $grey={i === 4}>
            <svg width="74" height="74" viewBox="0 0 74 74">
              <path d={d} fill="none" stroke={i === 4 ? "#5f7058" : "#dc5f1e"} strokeWidth={i === 5 ? 3.6 : 3} />
            </svg>
            {i === 2 && <RedDot />}
          </Tool>
        ))}
      </ToolRow>
    </ChartArea>
  );
}

/* ---------- promotion banner ---------- */

const PromoWrap = styled.section`
  height: 80px;
  overflow: hidden;
  padding: 0 20px;
  flex: none;
`;
const Promo = styled.div`
  box-sizing: border-box;
  height: 104px;
  border-radius: 52px;
  background: #fcece3;
  color: #dc5a14;
  padding: 0 40px 6px 33px;
  display: flex;
  align-items: center;
`;
const PromoRule = styled.i`
  width: 2px;
  height: 38px;
  margin: 0 17px 0 auto;
  background: #e08a5c;
`;

/* ---------- bottom navigation ---------- */

const BottomNav = styled.nav`
  box-sizing: border-box;
  height: 187px;
  border-top: 2px solid #d9dbdb;
  background: #f6f7f9;
  display: flex;
  flex: none;
`;
const IndexBlock = styled.div`
  width: 298px;
  display: flex;
  flex-direction: column;
  align-items: center;
  padding: 9px 0 0 0;
`;
const IndexRow = styled.div`
  width: 298px;
  box-sizing: border-box;
  height: ${(p) => p.$h}px;
  padding-left: ${(p) => p.$pl}px;
  display: flex;
  align-items: center;
`;
const NavItem = styled.div`
  width: 234.500px;
  display: flex;
  flex-direction: column;
  align-items: center;
  padding-top: 7px;
  font-size: 38px;
  line-height: 48px;
  color: ${C.grey};
  gap: 15px;
`;

const NavIcon = ({ children }) => (
  <svg width="72" height="68" viewBox="0 0 72 68" fill="none" stroke="#666" strokeWidth="3.500" strokeLinejoin="round">{children}</svg>
);

function Footer() {
  return (
    <>
      <PromoWrap>
        <Promo>
          <svg width="49" height="42" viewBox="0 0 49 42" fill="#ee5500">
            <path d="M0 14H5V29H0ZM9 13L44 1H49V41H44L37 36Q35 38 29 37L20 33Q18 31 18 29L9 28Z" />
          </svg>
          <Fit w={907} ml={57} size={42}>0门槛报名瓜分50万奖池，速戳报名ETF菁英赛&gt;&gt;</Fit>
          <PromoRule />
          <Cross size={37} color="#dc5a14" width={3} />
        </Promo>
      </PromoWrap>
      <BottomNav>
        <IndexBlock>
          <svg width="24" height="8" viewBox="0 0 24 8"><path d="M12 0L24 8H0Z" fill="#7c7c7c" /></svg>
          <IndexRow $h={72} $pl={72}><Fit w={156} size={44} color={C.green}>3906.83</Fit></IndexRow>
          <IndexRow $h={38} $pl={43}>
            <Fit w={79} size={39} color={C.grey}>上证</Fit>
            <Fit w={126} ml={48} size={42} color={C.green}>−0.44%</Fit>
          </IndexRow>
        </IndexBlock>
        <NavItem>
          <NavIcon>
            <path d="M20 8A29 29 0 0 1 64 47M60 46L64 49L71 42M56 57A29 29 0 0 1 9 20M1 23L9 18L10 27" />
            <path d="M26 19L36 31L46 19M36 31V49M25 32H47M25 40H47" />
          </NavIcon>
          交易
        </NavItem>
        <NavItem>
          <NavIcon>
            <path d="M50 5H14Q9 5 9 10V56Q9 61 14 61H58Q63 61 63 56V23" />
            <path d="M60 4L65 8L37 39L29 44L31 34Z" fill="#666" stroke="none" />
          </NavIcon>
          发帖
        </NavItem>
        <NavItem>
          <NavIcon>
            <rect x="9" y="7" width="23" height="23" rx="4" />
            <rect x="9" y="37" width="23" height="23" rx="4" />
            <rect x="40" y="37" width="23" height="23" rx="4" />
            <rect x="42" y="9" width="19.500" height="19.500" rx="3" transform="rotate(45 51.750 18.750)" />
          </NavIcon>
          功能
        </NavItem>
        <NavItem>
          <NavIcon>
            <circle cx="36" cy="34" r="29" />
            {[24, 36, 48].map((x) => <circle key={x} cx={x} cy="34" r="3.300" fill="#666" stroke="none" />)}
          </NavIcon>
          设自选
        </NavItem>
      </BottomNav>
    </>
  );
}

export default function App() {
  return (
    <Page>
      <GlobalStyle />
      <Status />
      <Header />
      <QuoteBlock />
      <Rows />
      <Periods />
      <Averages />
      <Charts />
      <Footer />
    </Page>
  );
}
